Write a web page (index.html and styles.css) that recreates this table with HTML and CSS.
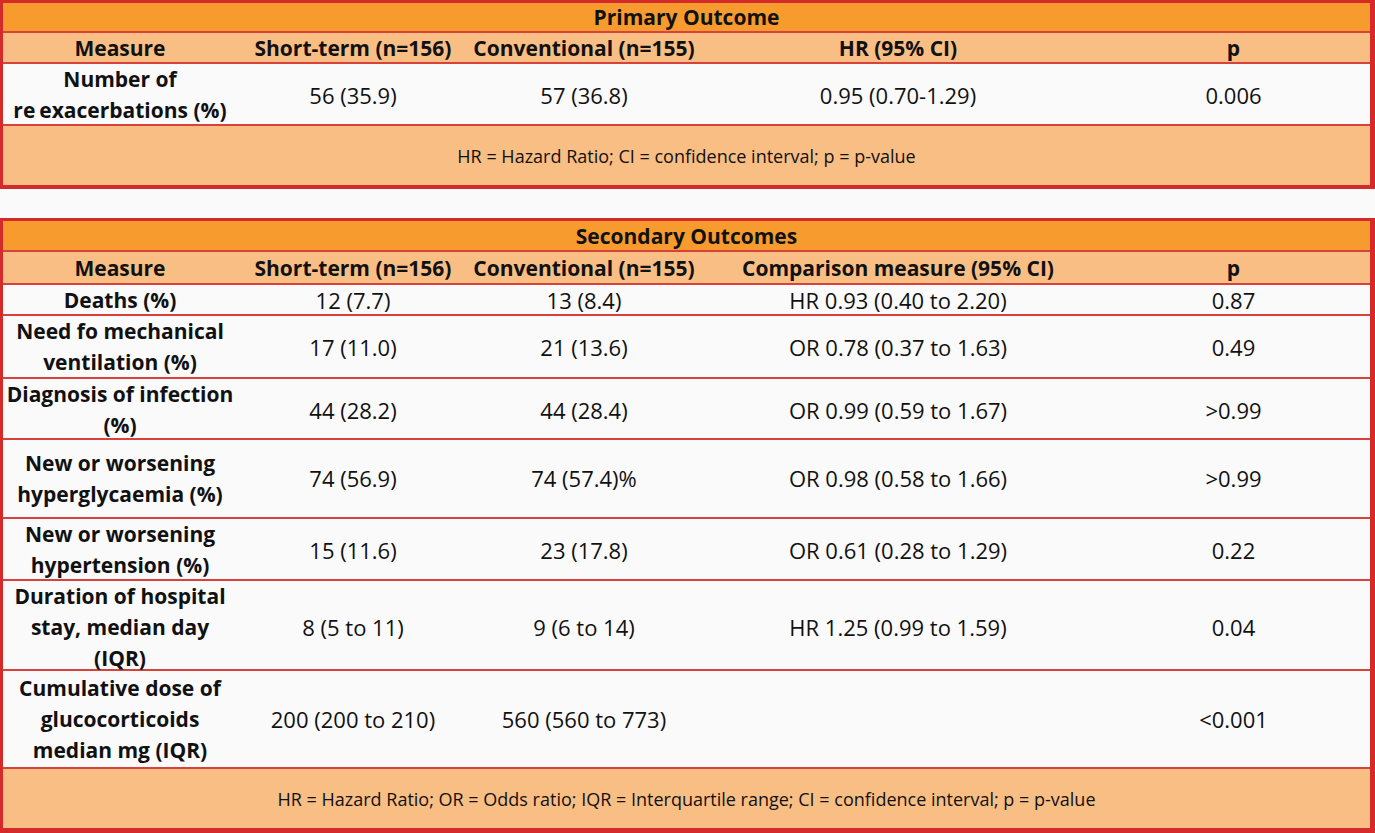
FILE: index.html
```html
<!DOCTYPE html>
<html lang="en">
<head>
<meta charset="utf-8">
<title>Outcomes</title>
<link rel="stylesheet" href="styles.css">
</head>
<body>
<section class="tbl t1">
  <div class="row title h30">Primary Outcome</div>
  <div class="row head h31">
    <div>Measure</div><div>Short-term (n=156)</div><div>Conventional (n=155)</div><div>HR (95% CI)</div><div>p</div>
  </div>
  <div class="row data h62">
    <div class="m">Number of<br>re<span class="gap">exacerbations</span> (%)</div><div>56 (35.9)</div><div>57 (36.8)</div><div>0.95 (0.70-1.29)</div><div>0.006</div>
  </div>
  <div class="row foot h59">HR = Hazard Ratio; CI = confidence interval; p = p-value</div>
</section>

<section class="tbl t2">
  <div class="row title h31">Secondary Outcomes</div>
  <div class="row head h33">
    <div>Measure</div><div>Short-term (n=156)</div><div>Conventional (n=155)</div><div>Comparison measure (95% CI)</div><div>p</div>
  </div>
  <div class="row data h31">
    <div class="m">Deaths (%)</div><div>12 (7.7)</div><div>13 (8.4)</div><div>HR 0.93 (0.40 to 2.20)</div><div>0.87</div>
  </div>
  <div class="row data h63">
    <div class="m">Need fo mechanical<br>ventilation (%)</div><div>17 (11.0)</div><div>21 (13.6)</div><div>OR 0.78 (0.37 to 1.63)</div><div>0.49</div>
  </div>
  <div class="row data h61">
    <div class="m">Diagnosis of infection<br>(%)</div><div>44 (28.2)</div><div>44 (28.4)</div><div>OR 0.99 (0.59 to 1.67)</div><div>&gt;0.99</div>
  </div>
  <div class="row data h79">
    <div class="m">New or worsening<br>hyperglycaemia (%)</div><div>74 (56.9)</div><div>74 (57.4)%</div><div>OR 0.98 (0.58 to 1.66)</div><div>&gt;0.99</div>
  </div>
  <div class="row data h62">
    <div class="m">New or worsening<br>hypertension (%)</div><div>15 (11.6)</div><div>23 (17.8)</div><div>OR 0.61 (0.28 to 1.29)</div><div>0.22</div>
  </div>
  <div class="row data h90">
    <div class="m">Duration of hospital<br>stay, median day<br>(IQR)</div><div>8 (5 to 11)</div><div>9 (6 to 14)</div><div>HR 1.25 (0.99 to 1.59)</div><div>0.04</div>
  </div>
  <div class="row data h98">
    <div class="m">Cumulative dose of<br>glucocorticoids<br>median mg (IQR)</div><div>200 (200 to 210)</div><div>560 (560 to 773)</div><div></div><div>&lt;0.001</div>
  </div>
  <div class="row foot h59">HR = Hazard Ratio; OR = Odds ratio; IQR = Interquartile range; CI = confidence interval; p = p-value</div>
</section>
</body>
</html>
```

FILE: styles.css
```css
* { box-sizing: border-box; }

html, body {
  margin: 0;
  padding: 0;
  background: #fafafa;
}

body {
  width: 1375px;
  font-family: "Open Sans", Lato, "Liberation Sans", sans-serif;
  color: #111;
}

.tbl {
  width: 1375px;
  border-left: 3px solid #d52a2a;
  border-right: 5px solid #d52a2a;
  border-top: 3px solid #d52a2a;
}

.t1 { border-bottom: 4px solid #d52a2a; }
.t2 { border-bottom: 5px solid #d52a2a; margin-top: 29px; }

.row {
  display: grid;
  grid-template-columns: 234px 232px 230px 398px 1fr;
  align-items: center;
  text-align: center;
  border-bottom: 2px solid #d8423c;
}

.row.title,
.row.foot {
  display: flex;
  align-items: center;
  justify-content: center;
}

.title {
  background: #f89b2f;
  font-weight: 700;
  font-size: 21px;
}

.head {
  background: #f9be84;
  font-weight: 700;
  font-size: 21px;
}

.data {
  background: #fafafa;
  font-size: 22px;
  line-height: 31px;
}

.data .m {
  font-weight: 700;
  font-size: 21px;
}

.gap { margin-left: 4px; }

.foot {
  background: #f9be84;
  font-size: 18px;
  border-bottom: none;
}

.h30 { height: 30px; }
.h31 { height: 31px; }
.h33 { height: 33px; }
.h59 { height: 59px; }
.h61 { height: 61px; }
.h62 { height: 62px; }
.h63 { height: 63px; }
.h79 { height: 79px; }
.h90 { height: 90px; }
.h98 { height: 98px; }
```
